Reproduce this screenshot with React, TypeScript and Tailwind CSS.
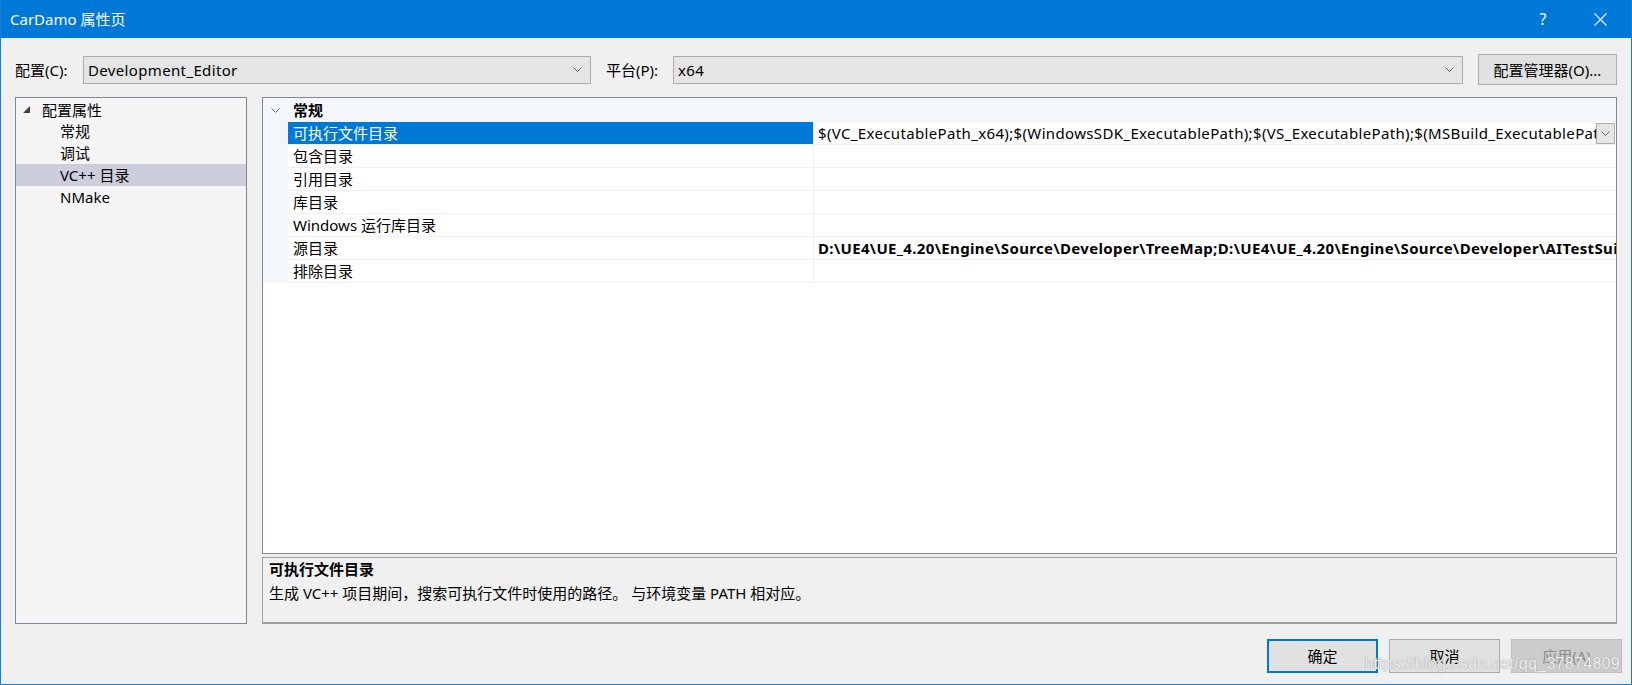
import React from 'react';

const rows = [
  { name: '可执行文件目录', value: '$(VC_ExecutablePath_x64);$(WindowsSDK_ExecutablePath);$(VS_ExecutablePath);$(MSBuild_ExecutablePath);$(FxCopDir);$(PATH);', selected: true },
  { name: '包含目录', value: '' },
  { name: '引用目录', value: '' },
  { name: '库目录', value: '' },
  { name: 'Windows 运行库目录', value: '' },
  { name: '源目录', value: 'D:\\UE4\\UE_4.20\\Engine\\Source\\Developer\\TreeMap;D:\\UE4\\UE_4.20\\Engine\\Source\\Developer\\AITestSuite;D:\\UE4\\UE_4.20\\Engine', bold: true },
  { name: '排除目录', value: '' },
];

const treeItems = ['常规', '调试', 'VC++ 目录', 'NMake'];

function Chevron({ className = '' }: { className?: string }) {
  return (
    <svg width="9" height="5" viewBox="0 0 9 5" className={className}>
      <polyline points="0.5,0.5 4.5,4.5 8.5,0.5" fill="none" stroke="currentColor" strokeWidth="1" />
    </svg>
  );
}

function ComboBox({ value, width }: { value: string; width: string }) {
  return (
    <div className={`${width} shrink-0 h-[28px] flex items-center bg-[#e5e5e5] border border-[#acacac] pl-[4px] pr-[8px]`}>
      <span className="flex-1 truncate tracking-[0.35px]">{value}</span>
      <Chevron className="text-[#606060]" />
    </div>
  );
}

export default function App() {
  return (
    <div className="w-[1632px] h-[685px] flex flex-col bg-[#f0f0f0] border-x border-b border-[#1a7fd4] text-[15px] leading-[22px] text-black font-['Noto_Sans','Noto_Sans_CJK_SC',sans-serif]">
      {/* title bar */}
      <div className="h-[38px] shrink-0 flex items-center bg-[#0078d7] text-white pl-[9px]">
        <span>CarDamo 属性页</span>
        <div className="ml-auto flex h-full items-center">
          <span className="w-[52px] text-center text-[16px]">?</span>
          <div className="w-[62px] flex justify-center">
            <svg width="13" height="13" viewBox="0 0 13 13">
              <path d="M0.5 0.5 L12.5 12.5 M12.5 0.5 L0.5 12.5" stroke="white" strokeWidth="1.1" />
            </svg>
          </div>
        </div>
      </div>

      <div className="flex-1 min-h-0 flex flex-col px-[14px]">
        {/* config row */}
        <div className="mt-[16px] h-[31px] flex items-center">
          <span className="w-[68px] shrink-0">配置(C):</span>
          <ComboBox value="Development_Editor" width="w-[508px]" />
          <span className="ml-[15px] w-[67px] shrink-0">平台(P):</span>
          <ComboBox value="x64" width="w-[790px]" />
          <button className="ml-[15px] w-[139px] shrink-0 h-[31px] bg-[#e1e1e1] border border-[#adadad]">配置管理器(O)...</button>
        </div>

        {/* main panels */}
        <div className="mt-[12px] h-[527px] flex gap-[15px]">
          <div className="w-[232px] shrink-0 bg-[#f5f5f5] border border-[#828790] pt-[1px]">
            <div className="h-[21px] flex items-center pl-[7px]">
              <svg width="7" height="7" viewBox="0 0 7 7" className="mr-[12px]">
                <polygon points="7,0 7,7 0,7" fill="#404040" />
              </svg>
              <span>配置属性</span>
            </div>
            {treeItems.map((item) => (
              <div
                key={item}
                className={`h-[22px] flex items-center pl-[44px] whitespace-nowrap ${item === 'VC++ 目录' ? 'bg-[#cccedb]' : ''}`}
              >
                {item}
              </div>
            ))}
          </div>

          <div className="flex-1 min-w-0 flex flex-col gap-[3px]">
            {/* property grid */}
            <div className="h-[457px] bg-white border border-[#828790] flex flex-col overflow-hidden">
              <div className="h-[24px] shrink-0 flex items-center bg-[#f3f6fa]">
                <div className="w-[25px] shrink-0 flex justify-center">
                  <Chevron className="text-[#707070]" />
                </div>
                <span className="pl-[5px] font-bold">常规</span>
              </div>
              {rows.map((row) => (
                <div key={row.name} className="h-[23px] shrink-0 flex">
                  <div className="w-[25px] shrink-0 bg-[#f3f6fa]" />
                  <div
                    className={`w-[526px] shrink-0 border-b border-r border-[#f0f0f0] pl-[5px] flex items-center whitespace-nowrap ${row.selected ? 'bg-[#0078d7] text-white' : ''}`}
                  >
                    {row.name}
                  </div>
                  <div className="flex-1 min-w-0 border-b border-[#f0f0f0] flex items-center pl-[4px]">
                    <span className={`flex-1 min-w-0 overflow-hidden whitespace-nowrap tracking-[0.35px] ${row.bold ? 'font-bold' : ''}`}>{row.value}</span>
                    {row.selected && (
                      <div className="w-[19px] h-[21px] shrink-0 mr-[1px] bg-[#e5e5e5] border border-[#acacac] flex items-center justify-center">
                        <Chevron className="text-[#606060]" />
                      </div>
                    )}
                  </div>
                </div>
              ))}
            </div>

            {/* description */}
            <div className="h-[67px] bg-[#f0f0f0] border border-b-2 border-[#a0a0a0] pl-[6px]">
              <div className="font-bold">可执行文件目录</div>
              <div className="mt-[2px]">生成 VC++ 项目期间，搜索可执行文件时使用的路径。 与环境变量 PATH 相对应。</div>
            </div>
          </div>
        </div>

        {/* buttons */}
        <div className="relative mt-[15px] -mr-[5px] flex justify-end gap-[11px]">
          <button className="w-[111px] h-[34px] bg-[#e1e1e1] border-2 border-[#0078d7]">确定</button>
          <button className="w-[111px] h-[34px] bg-[#e1e1e1] border border-[#adadad]">取消</button>
          <button className="w-[111px] h-[34px] bg-[#cccccc] border border-[#bfbfbf] text-[#8a8a8a]">应用(A)</button>
          <span className="absolute right-[2px] top-[14px] text-[16px] tracking-[0.3px] text-white/85 [text-shadow:0_0_1px_#999,0_0_1px_#999] font-['Liberation_Sans',sans-serif]">
            https://blog.csdn.net/qq_37874809
          </span>
        </div>
      </div>
    </div>
  );
}
